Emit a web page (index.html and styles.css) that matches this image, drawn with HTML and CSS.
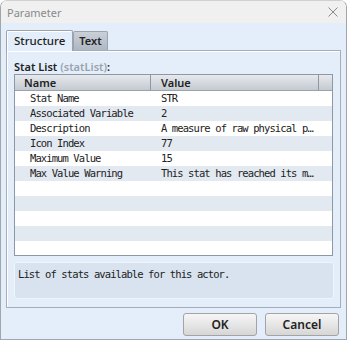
FILE: index.html
```html
<!DOCTYPE html>
<html lang="en">
<head>
    <meta charset="UTF-8">
    <title>Parameter</title>
    <link rel="stylesheet" href="styles.css">
</head>
<body>
    <div class="window">
        <div class="titlebar">
            <span class="title">Parameter</span>
            <svg class="close" width="10" height="10" viewBox="0 0 10 10">
                <path d="M0.5 0.5 L9.5 9.5 M9.5 0.5 L0.5 9.5" stroke="#8a8a8a" stroke-width="1"/>
            </svg>
        </div>

        <div class="client">
            <div class="tabs">
                <div class="tab active">Structure</div>
                <div class="tab">Text</div>
            </div>

            <div class="panel">
                <div class="list-label">Stat List <span class="muted">(statList)</span>:</div>

                <div class="table">
                    <div class="head">
                        <div class="col-name">Name</div>
                        <div class="col-value">Value</div>
                        <div class="col-end"></div>
                    </div>
                    <div class="row"><div class="col-name">Stat Name</div><div class="col-value">STR</div></div>
                    <div class="row"><div class="col-name">Associated Variable</div><div class="col-value">2</div></div>
                    <div class="row"><div class="col-name">Description</div><div class="col-value">A measure of raw physical power</div></div>
                    <div class="row"><div class="col-name">Icon Index</div><div class="col-value">77</div></div>
                    <div class="row"><div class="col-name">Maximum Value</div><div class="col-value">15</div></div>
                    <div class="row"><div class="col-name">Max Value Warning</div><div class="col-value">This stat has reached its maximum</div></div>
                    <div class="row"></div>
                    <div class="row"></div>
                    <div class="row"></div>
                    <div class="row"></div>
                    <div class="row"></div>
                </div>

                <div class="help">List of stats available for this actor.</div>
            </div>

            <div class="buttons">
                <button class="btn">OK</button>
                <button class="btn">Cancel</button>
            </div>
        </div>
    </div>
</body>
</html>
```

FILE: styles.css
```css
body {
    margin: 0;
    background-color: #ffffff;
    font-family: 'Noto Sans', sans-serif;
    color: #222;
}

.window {
    width: 347px;
    height: 340px;
    box-sizing: border-box;
    border: 1px solid #9ea6ae;
    border-top-color: #d0d0d0;
    border-radius: 7px 7px 0 0;
    overflow: hidden;
    display: flex;
    flex-direction: column;
}

.titlebar {
    height: 22px;
    flex: none;
    background-color: #f0f0f0;
    display: flex;
    align-items: center;
    justify-content: space-between;
    padding: 0 8px 0 6px;
}

.title {
    font-size: 11px;
    color: #8a8a8a;
}

.client {
    flex: 1;
    background-color: #e3eefa;
    padding: 7px 5px 0 5px;
    display: flex;
    flex-direction: column;
}

.tabs {
    display: flex;
    height: 20px;
    align-items: flex-end;
}

.tab {
    height: 18px;
    padding: 0 5px;
    font-size: 11px;
    font-weight: 600;
    line-height: 18px;
    color: #222;
    border: 1px solid #9ba4ae;
    border-bottom: none;
    background: linear-gradient(#c9d0d8, #aeb7c2);
    border-radius: 2px 2px 0 0;
}

.tab.active {
    height: 20px;
    line-height: 20px;
    padding: 0 7px;
    font-size: 11.5px;
    font-weight: 500;
    background: #e3eefa;
    margin-bottom: -1px;
    position: relative;
    z-index: 1;
    box-shadow: inset 1px 1px 0 #ffffff;
}

.panel {
    height: 258px;
    flex: none;
    box-sizing: border-box;
    border: 1px solid #a4adb8;
    box-shadow: inset 1px 1px 0 #ffffff;
    padding: 8px 6px 0 7px;
}

.list-label {
    font-size: 11px;
    font-weight: 600;
    height: 15px;
    line-height: 15px;
}

.muted {
    color: #9aa3ad;
    font-weight: 600;
}

.table {
    width: 319px;
    height: 182px;
    box-sizing: border-box;
    border: 1px solid #8e98a3;
    background-color: #ffffff;
    overflow: hidden;
}

.head {
    display: flex;
    height: 15px;
    background: linear-gradient(#e6e9ed, #c4cad1);
    border-bottom: 1px solid #9aa3ac;
    font-size: 11px;
    font-weight: 600;
    line-height: 15px;
}

.head .col-name {
    width: 126px;
    padding-left: 9px;
    border-right: 1px solid #8e98a3;
}

.head .col-value {
    flex: none;
    width: 156px;
}

.head .col-end {
    width: 13px;
    border-left: 1px solid #8e98a3;
    margin-left: auto;
}

.col-name {
    width: 121px;
    padding-left: 15px;
    flex: none;
}

.col-value {
    padding-left: 10px;
    flex: 1;
    min-width: 0;
    overflow: hidden;
    white-space: nowrap;
    text-overflow: ellipsis;
}

.row {
    display: flex;
    height: 15px;
    font-family: 'DejaVu Sans Mono', monospace;
    font-size: 10.5px;
    letter-spacing: -0.9px;
    line-height: 15px;
    color: #222;
    padding-right: 16px;
}

.row:nth-child(odd) {
    background-color: #e3e9f1;
}

.help {
    margin-top: 6px;
    height: 37px;
    box-sizing: border-box;
    background-color: #d8e3ef;
    border: 1px solid #eef4fa;
    border-radius: 3px;
    padding: 4px 3px;
    font-family: 'DejaVu Sans Mono', monospace;
    font-size: 10.5px;
    letter-spacing: -0.9px;
    line-height: 14px;
    color: #222;
}

.buttons {
    display: flex;
    justify-content: flex-end;
    gap: 8px;
    padding: 5px 2px 0 0;
}

.btn {
    width: 74px;
    height: 23px;
    border: 1px solid #a3a3a3;
    border-radius: 3px;
    background: linear-gradient(#f6f6f6, #d6d6d6);
    font-family: 'Noto Sans', sans-serif;
    font-size: 12px;
    font-weight: 600;
    color: #222;
    padding: 0;
}
```
